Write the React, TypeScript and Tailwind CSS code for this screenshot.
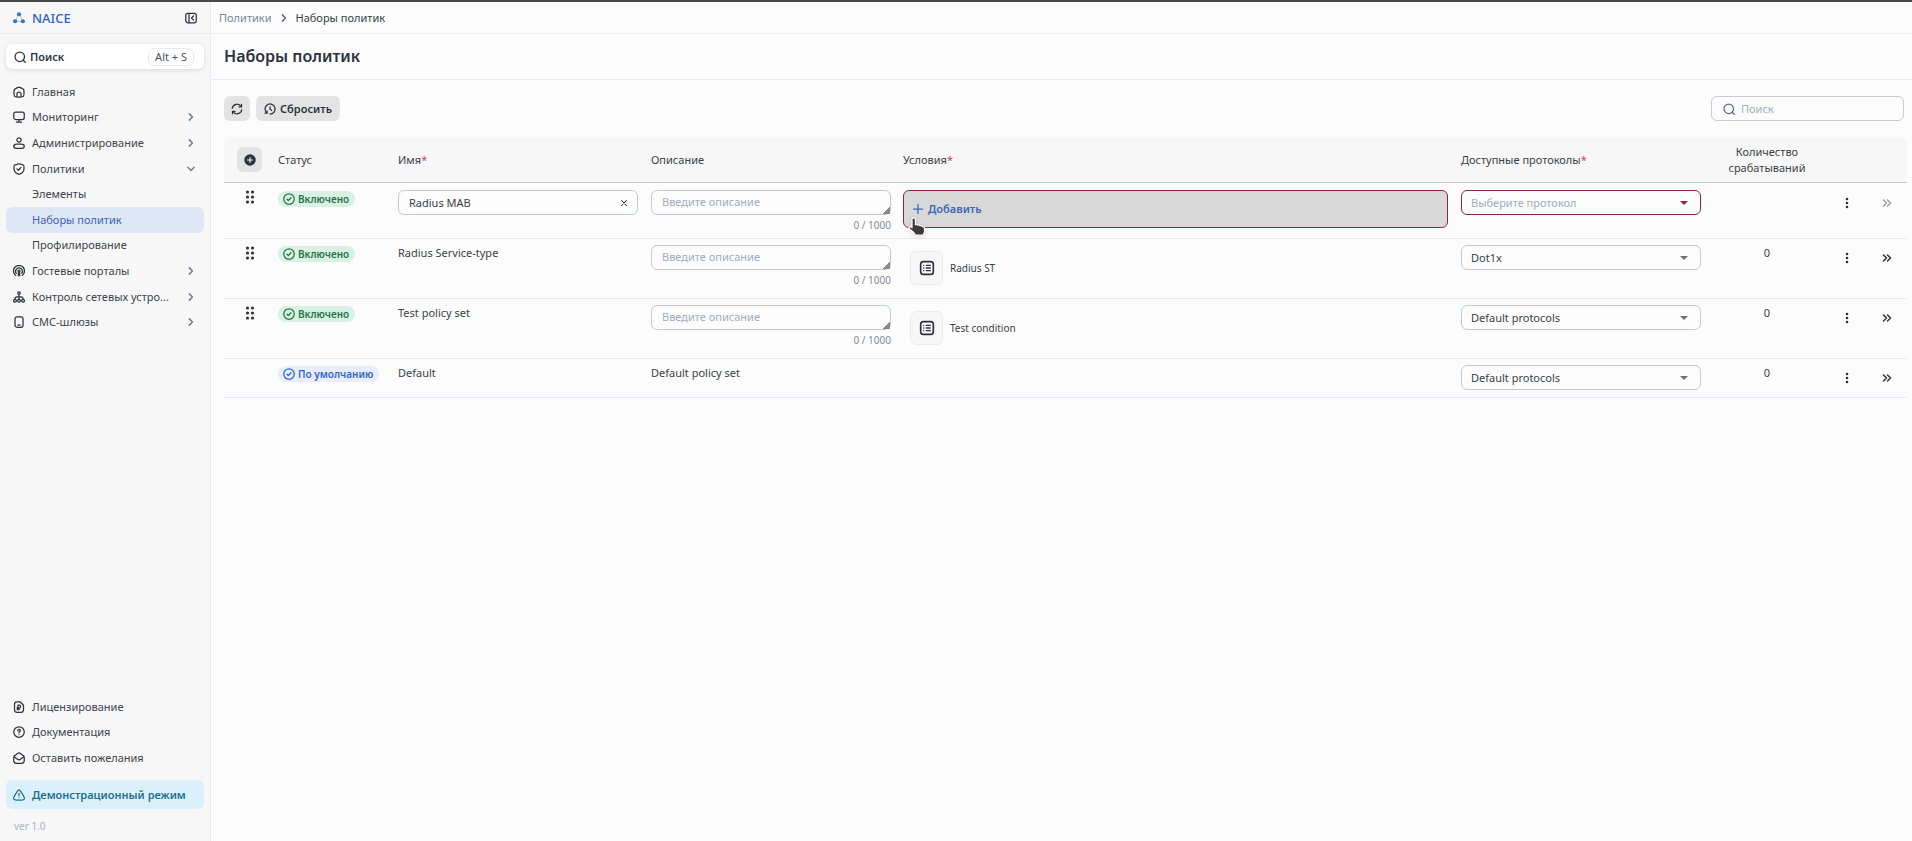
import { useState, type ReactNode } from "react";

type IconProps = { className?: string; children?: ReactNode };

function Icon({ className = "size-3", children }: IconProps) {
  return (
    <svg
      viewBox="0 0 24 24"
      className={`shrink-0 ${className}`}
      fill="none"
      stroke="currentColor"
      strokeWidth="2.500"
      strokeLinecap="round"
      strokeLinejoin="round"
      aria-hidden="true"
    >
      {children}
    </svg>
  );
}

const HomeIcon = () => (
  <Icon>
    <path d="M2 12.2c0-2.3 0-3.4.5-4.4s1.500-1.600 3.400-2.800l2-1.200C9.900 2.600 10.900 2 12 2s2.100.6 4.100 1.800l2 1.200c1.900 1.200 2.900 1.800 3.400 2.800s.5 2.100.5 4.400v1.500c0 3.900 0 5.900-1.200 7.100S17.800 22 14 22h-4c-3.800 0-5.700 0-6.800-1.200S2 17.600 2 13.700z" />
    <path d="M8 21v-5a4 4 0 0 1 8 0v5" />
  </Icon>
);
const MonitorIcon = () => (
  <Icon>
    <rect x="1.500" y="2" width="21" height="15" rx="4" />
    <path d="M12 17v4M7 22h10" />
  </Icon>
);
const UserIcon = () => (
  <Icon>
    <circle cx="12" cy="6" r="4.200" />
    <path d="M7 14h10c3 0 5.500 2 5.500 4.500S20.500 22.500 18 22.500H6c-2.500 0-4.500-1-4.500-4S4 14 7 14z" />
  </Icon>
);
const ShieldIcon = () => (
  <Icon>
    <path d="M2 9.800c0-3.200 0-4.600.5-5.100.4-.6 2.400-1.100 5.400-2.100l.6-.2C10 1.800 11.200 1.500 12 1.500s2 .3 3.500.8l.6.200c3 1 5 1.600 5.400 2.200.5.500.5 2 .5 5.200v1.600c0 5.800-4.700 9-7.400 10.200-.9.400-1.600.8-2.600.8s-1.700-.4-2.600-.8C6.700 20.500 2 17.300 2 11.500z" />
    <path d="m8 12 2.800 2.500L16 9" />
  </Icon>
);
const PortalIcon = () => (
  <Icon>
    <path d="M5.500 20.800a11 11 0 1 1 13 0" />
    <path d="M6.500 16.800a6.800 6.800 0 1 1 11 0" />
    <path d="M10.500 21.500 11 15M13.500 21.500 13 15" />
    <circle cx="12" cy="12" r="2" />
  </Icon>
);
const NetworkIcon = () => (
  <Icon>
    <circle cx="12" cy="4" r="2.500" />
    <circle cx="4" cy="19.500" r="2.800" />
    <circle cx="12" cy="19.500" r="2.800" />
    <circle cx="20" cy="19.500" r="2.800" />
    <path d="M12 7v9M4 16c0-3 2-4.500 4-4.500h8c2 0 4 1.500 4 4.500" />
  </Icon>
);
const PhoneIcon = () => (
  <Icon>
    <rect x="4" y="1.500" width="16" height="21" rx="4" />
    <path d="M9.500 18h5" />
  </Icon>
);
const LicenseIcon = () => (
  <Icon>
    <path d="M3 6.500c0-3 2-5 5-5h6l7 7v9c0 3-2 5-5 5H8c-3 0-5-2-5-5z" />
    <path d="M10 18V8h2.500a2.500 2.500 0 0 1 0 5.500H8M8 16h5" />
  </Icon>
);
const HelpIcon = () => (
  <Icon>
    <circle cx="12" cy="12" r="10.500" />
    <path d="M9.500 9.500a2.500 2.500 0 1 1 3.500 2.300c-.7.300-1 .8-1 1.700M12 17v.1" />
  </Icon>
);
const MailIcon = () => (
  <Icon>
    <path d="M1.500 11c0-2 .5-3 2.500-4.200L9 3c2-1.500 4-1.500 6 0l5 3.800c2 1.200 2.500 2.200 2.500 4.200v6c0 4-1.500 5.500-5 5.500h-11c-3.500 0-5-1.500-5-5.500z" />
    <path d="m3 10 6 4.500c2 1.500 4 1.500 6 0l6-4.500" />
  </Icon>
);
const WarnIcon = () => (
  <Icon>
    <path d="M12 1.500c1.300 0 2.200 1.200 4 4.200l4.700 7.500c2 3.600 2.800 5.500 2 6.900s-2.300 2-5.700 2H7c-3.400 0-4.900-.6-5.700-2s0-3.300 2-6.900L8 5.700c1.800-3 2.700-4.200 4-4.200z" />
    <path d="M12 8.500v5M12 17.500v.1" />
  </Icon>
);
const SearchIcon = ({ className }: IconProps) => (
  <Icon className={className}>
    <circle cx="11.500" cy="11.500" r="9.500" />
    <path d="M18.500 18.500 22.500 22.500" />
  </Icon>
);
const Chevron = ({ className = "size-3" }: IconProps) => (
  <Icon className={className}>
    <path d="m8 4.500 7.500 7.500L8 19.500" strokeWidth="3.500" />
  </Icon>
);
const Logo = () => (
  <svg viewBox="0 0 24 24" className="size-3 shrink-0 text-[#3a6fd0]" fill="currentColor" aria-hidden="true">
    <path d="M12 4 4 19M12 4l8 15M4 19h16" stroke="currentColor" strokeWidth="1.500" opacity="0.500" />
    <circle cx="12" cy="4.500" r="4.200" />
    <circle cx="4.200" cy="18.500" r="4.200" />
    <circle cx="19.800" cy="18.500" r="4.200" />
  </svg>
);
const CheckCircle = () => (
  <Icon>
    <circle cx="12" cy="12" r="10.500" />
    <path d="m8 12.500 2.700 2.500L16 9.500" />
  </Icon>
);
const DragIcon = () => (
  <svg viewBox="0 0 10 14" className="h-3.5 w-2.5" fill="currentColor" aria-hidden="true">
    {[2, 7, 12].map((y) => (
      <g key={y}>
        <circle cx="2.500" cy={y} r="1.600" />
        <circle cx="7.500" cy={y} r="1.600" />
      </g>
    ))}
  </svg>
);
const DotsIcon = () => (
  <svg viewBox="0 0 4 12" className="h-3 w-1" fill="currentColor" aria-hidden="true">
    {[2, 6, 10].map((y) => (
      <circle key={y} cx="2" cy={y} r="1.300" />
    ))}
  </svg>
);
const DoubleChevron = () => (
  <Icon>
    <path d="m5 6 6 6-6 6M13 6l6 6-6 6" strokeWidth="3" />
  </Icon>
);

type NavItem = { label: string; icon?: ReactNode; chevron?: "right" | "down"; active?: boolean };

const mainNav: NavItem[] = [
  { label: "Главная", icon: <HomeIcon /> },
  { label: "Мониторинг", icon: <MonitorIcon />, chevron: "right" },
  { label: "Администрирование", icon: <UserIcon />, chevron: "right" },
  { label: "Политики", icon: <ShieldIcon />, chevron: "down" },
  { label: "Элементы" },
  { label: "Наборы политик", active: true },
  { label: "Профилирование" },
  { label: "Гостевые порталы", icon: <PortalIcon />, chevron: "right" },
  { label: "Контроль сетевых устро...", icon: <NetworkIcon />, chevron: "right" },
  { label: "СМС-шлюзы", icon: <PhoneIcon />, chevron: "right" },
];

const helpNav: NavItem[] = [
  { label: "Лицензирование", icon: <LicenseIcon /> },
  { label: "Документация", icon: <HelpIcon /> },
  { label: "Оставить пожелания", icon: <MailIcon /> },
];

function NavLink({ item }: { item: NavItem }) {
  return (
    <a
      href="#"
      aria-current={item.active ? "page" : undefined}
      className={`flex min-h-0 items-center gap-[7px] rounded-md pr-2 pl-[7px] ${
        item.active ? "bg-[#dfe6f6] text-[#3e63b5]" : "text-[#3f444d]"
      }`}
    >
      <span className="flex w-3 shrink-0 text-[#2d333d]">{item.icon}</span>
      <span className="grow whitespace-nowrap">{item.label}</span>
      {item.chevron && (
        <span className="text-[#6f7b90]">
          <Chevron className={item.chevron === "down" ? "size-2.5 rotate-90" : "size-2.5"} />
        </span>
      )}
    </a>
  );
}

function Sidebar() {
  return (
    <aside className="flex w-[211px] shrink-0 flex-col border-r border-[#e8e9ec] bg-[#f7f7f7]">
      <div className="flex h-8 items-center justify-between border-b border-[#ebecef] px-[13px]">
        <a href="#" className="flex items-center gap-[7px] text-[13px] font-medium text-[#2f62cb]">
          <Logo />
          NAICE
        </a>
        <button type="button" aria-label="Свернуть меню" className="text-[#2d333d]">
          <Icon>
            <rect x="1.500" y="2.500" width="21" height="19" rx="4" />
            <path d="M8 3v18M17 8l-4 4 4 4" />
          </Icon>
        </button>
      </div>
      <div className="flex grow flex-col px-1.5 pt-2.5">
        <button
          type="button"
          className="flex h-[25px] items-center gap-1 rounded-md bg-white pr-2.5 pl-2 font-semibold text-[#2d333d] shadow-[0_1px_4px_rgba(40,50,80,0.15)]"
        >
          <SearchIcon className="size-3" />
          Поиск
          <kbd className="ml-auto rounded-md border border-[#e8e9ee] px-1.5 leading-4 font-normal text-[#4b5260] [font-family:inherit]">
            Alt + S
          </kbd>
        </button>
        <nav aria-label="Основное меню" className="mt-2.5 grid h-64 auto-rows-fr">
          {mainNav.map((item) => (
            <NavLink key={item.label} item={item} />
          ))}
        </nav>
        <nav aria-label="Помощь" className="mt-auto grid h-[77px] auto-rows-fr">
          {helpNav.map((item) => (
            <NavLink key={item.label} item={item} />
          ))}
        </nav>
        <div className="mt-[9px] flex h-[29px] items-center gap-[7px] rounded-md bg-[#daf1fc] pl-[7px] font-semibold text-[#21708f]">
          <WarnIcon />
          Демонстрационный режим
        </div>
        <p className="mt-2.5 mb-2 pl-2 text-[10px] leading-[14px] text-[#a9b2c2]">ver 1.0</p>
      </div>
    </aside>
  );
}

function Badge({ kind }: { kind: "on" | "default" }) {
  return (
    <span
      className={`inline-flex h-4 items-center gap-[3px] rounded-full pr-1.5 pl-[5px] text-[10px] font-semibold whitespace-nowrap ${
        kind === "on" ? "bg-[#d9f1e3] text-[#25754a]" : "bg-[#e7eefa] text-[#3564cc]"
      }`}
    >
      <CheckCircle />
      {kind === "on" ? "Включено" : "По умолчанию"}
    </span>
  );
}

function Description({ name }: { name: string }) {
  return (
    <div className="w-60">
      <textarea
        aria-label={`Описание: ${name}`}
        placeholder="Введите описание"
        rows={1}
        className="block h-[25px] w-full resize-y overflow-hidden rounded-md border border-[#c6c9d8] bg-transparent px-2.5 py-[3px] leading-4 placeholder:text-[#a3acbd] [&::-webkit-resizer]:bg-[linear-gradient(135deg,transparent_76%,#8a8a8a_76%)]"
      />
      <p className="mt-[3px] text-right text-[10px] leading-[14px] text-[#858c99]">0 / 1000</p>
    </div>
  );
}

function ProtocolSelect({ name, value, invalid }: { name: string; value: string; invalid?: boolean }) {
  return (
    <div
      className={`flex h-[25px] w-60 items-center rounded-md border ${
        invalid ? "border-[#8f2442] text-[#8f2442]" : "border-[#c6c9d8] text-[#6b6f76]"
      }`}
    >
      <div className="grid w-full grid-cols-1 items-center">
        <select
          aria-label={`Доступные протоколы: ${name}`}
          defaultValue={value}
          className={`col-start-1 row-start-1 h-[23px] w-full appearance-none bg-transparent pl-[9px] ${
            invalid ? "text-[#a3acbd]" : "text-[#3a3f48]"
          }`}
        >
          <option value="">Выберите протокол</option>
          <option>Dot1x</option>
          <option>Default protocols</option>
        </select>
        <svg
          viewBox="0 0 8 4"
          className="pointer-events-none col-start-1 row-start-1 mr-3 h-1 w-2 justify-self-end"
          fill="currentColor"
          aria-hidden="true"
        >
          <path d="M0 0h8L4 4z" />
        </svg>
      </div>
    </div>
  );
}

function Condition({ label }: { label: string }) {
  return (
    <div className="flex items-center gap-[7px] pt-1.5 pl-[7px] text-[10px]">
      <span className="flex h-[34px] w-[33px] items-center justify-center rounded-md border border-[#ececef] bg-[#f7f7f7] text-[#2d333d]">
        <Icon className="size-4">
          <rect x="2.500" y="2.500" width="19" height="19" rx="4" />
          <path d="M7 8h.1M7 12h.1M7 16h.1M11 8h6M11 12h6M11 16h6" strokeWidth="2" />
        </Icon>
      </span>
      {label}
    </div>
  );
}

function HandCursor() {
  return (
    <svg viewBox="0 0 18 20" className="pointer-events-none absolute top-[27px] left-[5px] h-5 w-[18px] drop-shadow-sm" aria-hidden="true">
      <path
        d="M4 2.500c0-2.200 3.400-2.200 3.400 0v5.300c.8-.4 1.900-.3 2.400.4.800-.4 1.900-.2 2.400.6.800-.3 1.800 0 2.200.8 1.200-.2 2.100.5 2.100 1.800v3c0 1.200-.9 2-1.100 3.600H7.200c-.3-1.600-1.400-2.300-2.700-3.500L1.300 11.800c-1-1.200.3-2.700 1.700-1.900l1 .7z"
        fill="#3a3a3a"
        stroke="#fff"
        strokeWidth="1.200"
        strokeLinejoin="round"
      />
    </svg>
  );
}

type Row = { name: string; status: "on" | "default"; protocol: string; condition?: string; count?: number; height: string };

const rows: Row[] = [
  { name: "Radius MAB", status: "on", protocol: "", height: "h-14" },
  { name: "Radius Service-type", status: "on", protocol: "Dot1x", condition: "Radius ST", count: 0, height: "h-15" },
  { name: "Test policy set", status: "on", protocol: "Default protocols", condition: "Test condition", count: 0, height: "h-15" },
  { name: "Default", status: "default", protocol: "Default protocols", count: 0, height: "h-[39px]" },
];

function PolicyRow({ row }: { row: Row }) {
  const isNew = row.count === undefined;
  const isDefault = row.status === "default";
  const [name, setName] = useState(row.name);
  const pad = isNew ? "pt-[7px] pb-1.5" : "py-1.5";
  return (
    <tr className={`${row.height} align-top`}>
      <td className="px-1.5 pt-[7px]">
        {!isDefault && (
          <button type="button" aria-label={`Переместить ${row.name}`} className="ml-2 flex w-6 justify-center text-[#2d333d]">
            <DragIcon />
          </button>
        )}
      </td>
      <td className={`px-1.5 ${isNew ? "pt-2" : "pt-[7px]"}`}>
        <div className="flex">
          <Badge kind={row.status} />
        </div>
      </td>
      <td className={`px-1.5 ${pad}`}>
        {isNew ? (
          <div className="flex h-[25px] w-60 items-center rounded-md border border-[#c6c9d8] pr-2 pl-2.5">
            <input
              aria-label="Имя"
              value={name}
              onChange={(e) => setName(e.target.value)}
              className="min-w-0 grow bg-transparent outline-none"
            />
            <button type="button" aria-label="Очистить имя" onClick={() => setName("")} className="text-[#2d333d]">
              <Icon className="size-2.5">
                <path d="m6 6 12 12M18 6 6 18" />
              </Icon>
            </button>
          </div>
        ) : (
          row.name
        )}
      </td>
      <td className={`px-1.5 ${pad}`}>{isDefault ? "Default policy set" : <Description name={row.name} />}</td>
      <td className={`pr-[7px] pl-1.5 ${pad}`}>
        {isNew && (
          <div className="relative">
            <button
              type="button"
              className="flex h-[38px] w-full items-center gap-1 rounded-md border border-[#8f2442] bg-[#d8d8d8] pl-2 font-semibold text-[#3f66b5]"
            >
              <Icon>
                <path d="M12 3v18M3 12h18" />
              </Icon>
              Добавить
            </button>
            <HandCursor />
          </div>
        )}
        {row.condition && <Condition label={row.condition} />}
      </td>
      <td className={`px-1.5 ${pad}`}>
        <ProtocolSelect name={row.name} value={row.protocol} invalid={isNew} />
      </td>
      <td className={`px-1.5 text-center ${pad}`}>{row.count}</td>
      <td className={pad}>
        <button type="button" aria-label={`Действия: ${row.name}`} className="flex h-[25px] w-full items-center justify-center text-[#2d333d]">
          <DotsIcon />
        </button>
      </td>
      <td className={pad}>
        <button
          type="button"
          aria-label={`Открыть ${row.name}`}
          disabled={isNew}
          className="flex h-[25px] w-full items-center justify-center text-[#2d333d] disabled:text-[#9b9fa6]"
        >
          <DoubleChevron />
        </button>
      </td>
    </tr>
  );
}

const Required = () => <span className="text-[#dd3c5e]">*</span>;

export default function App() {
  return (
    <div className="flex min-h-screen border-t-2 border-[#4a4649] bg-[#fcfcfc] text-[11px] leading-4 text-[#3a3f48] [font-family:'Noto_Sans','Open_Sans',sans-serif]">
      <Sidebar />
      <main className="min-w-0 grow">
        <nav aria-label="Навигационная цепочка" className="flex h-8 items-center gap-[7px] border-b border-[#ebecef] px-2">
          <a href="#" className="text-[#7d8592]">
            Политики
          </a>
          <span className="text-[#5f6b80]">
            <Chevron className="size-2.5" />
          </span>
          <span aria-current="page">Наборы политик</span>
        </nav>
        <header className="flex h-[46px] items-center border-b border-[#ebecef] px-[13px] pb-0.5">
          <h1 className="text-[16px] leading-6 font-semibold text-[#2d333d]">Наборы политик</h1>
        </header>
        <div className="pt-4 pr-[5px] pl-[13px]">
          <div className="flex items-center gap-1.5 pr-[3px]">
            <button
              type="button"
              aria-label="Обновить"
              className="flex h-[25px] w-[26px] items-center justify-center rounded-md bg-[#e3e3e3] text-[#2d333d]"
            >
              <Icon>
                <path d="M2.500 10.500A9.500 9.500 0 0 1 20 7M21.500 13.500A9.500 9.500 0 0 1 4 17" />
                <path d="M21 2.500V7.500h-5M3 21.500v-5h5" />
              </Icon>
            </button>
            <button
              type="button"
              className="flex h-[25px] items-center gap-1 rounded-md bg-[#e3e3e3] px-2 font-semibold text-[#2d333d]"
            >
              <Icon>
                <path d="M5.500 19.500A10 10 0 1 1 12 22" />
                <path d="M2 20h4v-4.500M12 7.500V12l3 2.500" />
              </Icon>
              Сбросить
            </button>
            <label className="ml-auto flex h-[25px] w-[193px] items-center gap-1.5 rounded-md border border-[#c6c9d8] px-[11px] text-[#5f6b80]">
              <SearchIcon className="size-3" />
              <input
                type="search"
                aria-label="Поиск"
                placeholder="Поиск"
                className="min-w-0 grow bg-transparent outline-none placeholder:text-[#a3acbd]"
              />
            </label>
          </div>
          <table className="mt-4 w-full table-fixed border-separate border-spacing-0 text-left [&_td]:border-b [&_td]:border-[#e8e9ee]">
            <colgroup>
              <col className="w-12" />
              <col className="w-[120px]" />
              <col className="w-[253px]" />
              <col className="w-[252px]" />
              <col />
              <col className="w-[252px]" />
              <col className="w-[120px]" />
              <col className="w-10" />
              <col className="w-10" />
            </colgroup>
            <thead>
              <tr className="h-[46px] [&>th]:border-b [&>th]:border-[#c3c8d3] [&>th]:bg-[#f7f7f7] [&>th]:px-1.5 [&>th]:font-normal">
                <th className="rounded-tl-md">
                  <button
                    type="button"
                    aria-label="Добавить набор"
                    className="ml-[7px] flex size-[25px] items-center justify-center rounded-md bg-[#e3e3e3] text-[#2d333d]"
                  >
                    <svg viewBox="0 0 24 24" className="size-3" aria-hidden="true">
                      <circle cx="12" cy="12" r="11.500" fill="currentColor" />
                      <path d="M12 7v10M7 12h10" stroke="#fff" strokeWidth="2" strokeLinecap="round" />
                    </svg>
                  </button>
                </th>
                <th>Статус</th>
                <th>
                  Имя
                  <Required />
                </th>
                <th>Описание</th>
                <th>
                  Условия
                  <Required />
                </th>
                <th>
                  Доступные протоколы
                  <Required />
                </th>
                <th className="text-center">Количество срабатываний</th>
                <th aria-label="Действия" />
                <th aria-label="Открыть" className="rounded-tr-md" />
              </tr>
            </thead>
            <tbody>
              {rows.map((row) => (
                <PolicyRow key={row.name} row={row} />
              ))}
            </tbody>
          </table>
        </div>
      </main>
    </div>
  );
}
